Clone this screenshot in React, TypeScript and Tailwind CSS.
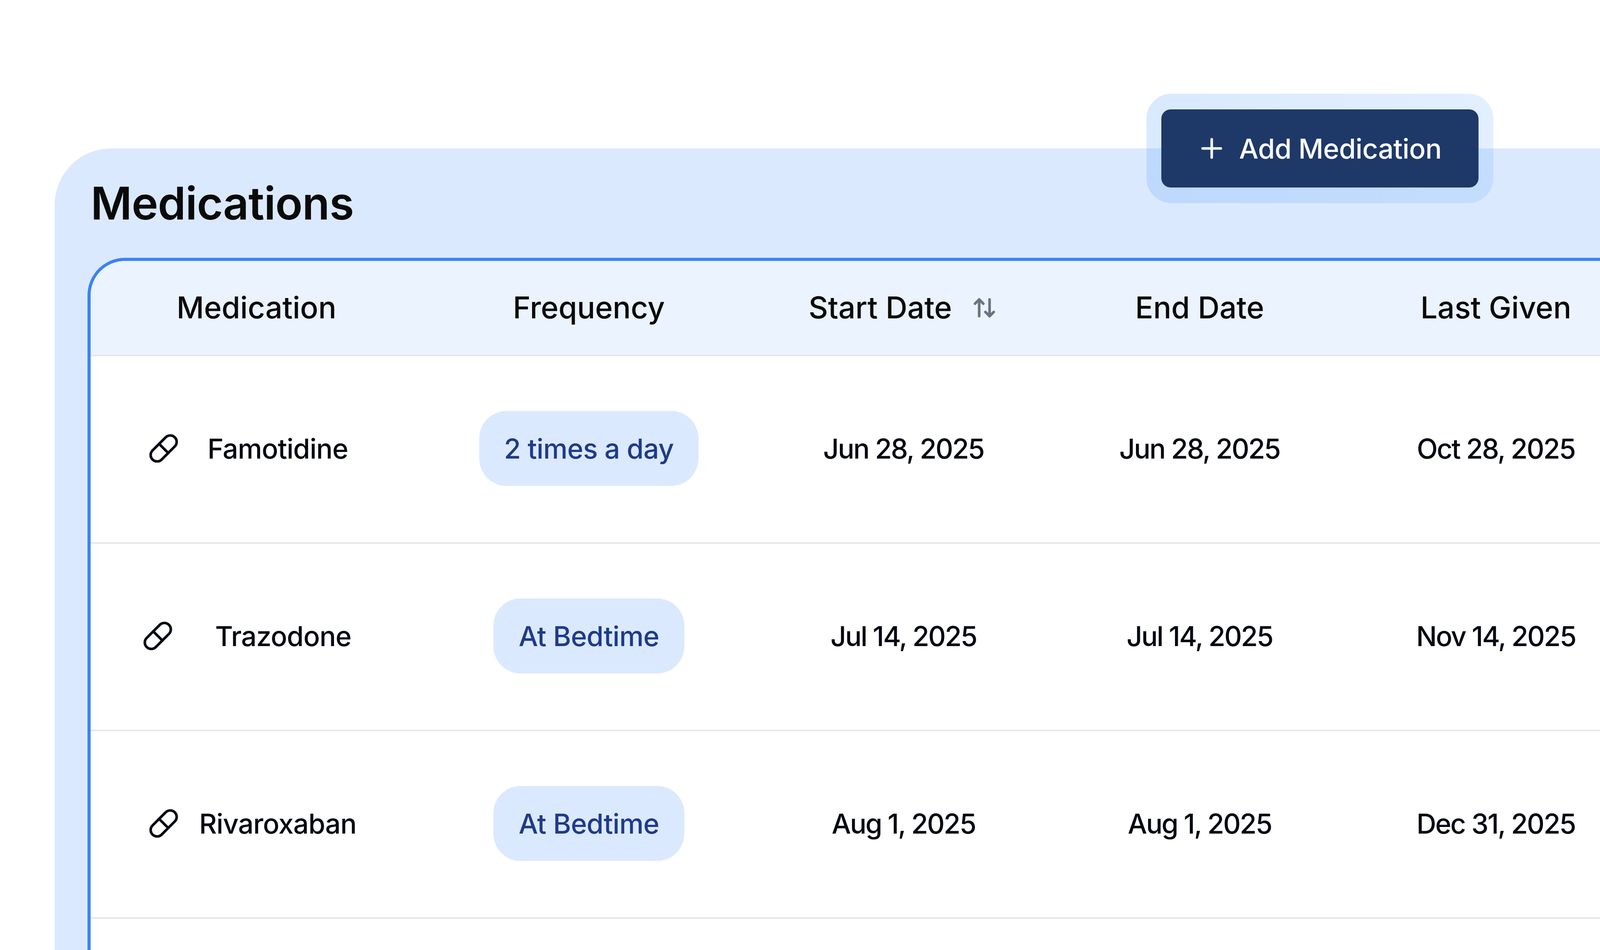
import { ArrowUpDown, Pill, Plus } from "lucide-react";

const gridCols = "grid grid-cols-[849px_853px_758px_758px_1fr]";

const rows = [
  {
    name: "Famotidine",
    cell: "pl-[147px]",
    slot: "w-[504px]",
    freq: "2 times a day",
    pill: "w-[561px]",
    start: "Jun 28, 2025",
    end: "Jun 28, 2025",
    last: "Oct 28, 2025",
  },
  {
    name: "Trazodone",
    cell: "pl-[132px]",
    slot: "w-[562px]",
    freq: "At Bedtime",
    pill: "w-[489px]",
    start: "Jul 14, 2025",
    end: "Jul 14, 2025",
    last: "Nov 14, 2025",
  },
  {
    name: "Rivaroxaban",
    cell: "pl-[147px]",
    slot: "w-[504px]",
    freq: "At Bedtime",
    pill: "w-[489px]",
    start: "Aug 1, 2025",
    end: "Aug 1, 2025",
    last: "Dec 31, 2025",
  },
];

export default function App() {
  return (
    <div className="h-[2432px] w-full overflow-hidden bg-white pl-[140px] pt-[380px] font-['Inter',sans-serif]">
      <section className="relative h-[2052px] rounded-tl-[144px] bg-[#dbe9fe]">
        <div className="absolute left-[2795px] top-[-140px] z-10 rounded-[64px] bg-linear-to-r from-[#60a5fa]/24 to-[#60a5fa]/18 px-[38px] py-[40px]">
          <button className="flex h-[200px] w-[812px] items-center rounded-[24px] bg-[#1e3868] pl-[89px] text-[70px] font-[550] tracking-[-0.6px] text-[#f8fafc]">
            <Plus size={80} className="shrink-0" />
            <span className="ml-[30px]">Add Medication</span>
          </button>
        </div>

        <div className="flex h-[280px] items-center pl-[92px]">
          <h1 className="text-[115px] font-semibold leading-none tracking-[-1px] text-[#0a0a0a]">Medications</h1>
        </div>

        <div className="ml-[84px] h-[1772px] overflow-hidden rounded-tl-[96px] border-l-[8px] border-t-[8px] border-[#3b82f6] bg-white">
          <div className={`${gridCols} h-[240px] items-center bg-[#ebf3ff] text-[77px] font-[550] tracking-[-0.1px] text-[#0a0a0a]`}>
            <div className="text-center">Medication</div>
            <div className="text-center">Frequency</div>
            <div className="flex items-center justify-center gap-[51px] pr-[4px]">
              Start Date
              <ArrowUpDown size={64} strokeWidth={2.5} className="text-[#6b7280]" />
            </div>
            <div className="text-center">End Date</div>
            <div className="pl-[113px] text-center">Last Given</div>
          </div>

          {rows.map((row) => (
            <div
              key={row.name}
              className={`${gridCols} h-[480px] items-center border-t-[4px] border-[#e5e7eb] pb-[4px] text-[70px] font-[550] text-[#030712]`}
            >
              <div className={`flex items-center ${row.cell}`}>
                <Pill size={80} className="shrink-0" />
                <span className={`${row.slot} text-center tracking-[-1px]`}>{row.name}</span>
              </div>
              <div className="flex justify-center">
                <span className={`flex h-[192px] items-center justify-center rounded-[70px] bg-[#dbe9fe] tracking-[-0.7px] text-[#1e3a8a] ${row.pill}`}>
                  {row.freq}
                </span>
              </div>
              <div className="text-center tracking-[-2.6px]">{row.start}</div>
              <div className="text-center tracking-[-2.6px]">{row.end}</div>
              <div className="pl-[113px] text-center tracking-[-2.6px]">{row.last}</div>
            </div>
          ))}
          <div className="h-[80px] border-t-[4px] border-[#e5e7eb]" />
        </div>
      </section>
    </div>
  );
}
